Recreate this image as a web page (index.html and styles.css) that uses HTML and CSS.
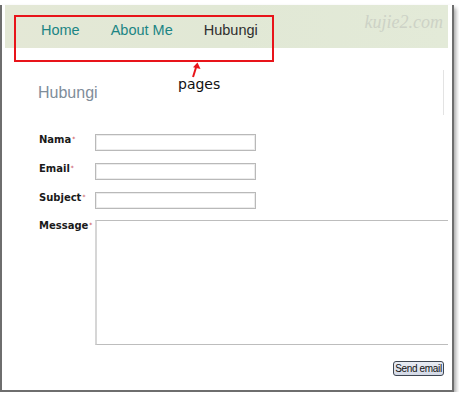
FILE: index.html
```html
<!DOCTYPE html>
<html>
<head>
<meta charset="utf-8">
<link rel="stylesheet" href="styles.css">
</head>
<body>
<div class="frame">
  <div class="header">
    <nav class="nav">
      <a class="nav-link">Home</a>
      <a class="nav-link">About Me</a>
      <a class="nav-link current">Hubungi</a>
    </nav>
    <div class="watermark">kujie2.com</div>
  </div>

  <div class="top-row">
    <h1 class="title">Hubungi</h1>
  </div>

  <form class="form">
    <div class="row">
      <label class="label">Nama<span class="req">*</span></label>
      <input class="field" type="text">
    </div>
    <div class="row">
      <label class="label">Email<span class="req">*</span></label>
      <input class="field" type="text">
    </div>
    <div class="row">
      <label class="label">Subject<span class="req">*</span></label>
      <input class="field" type="text">
    </div>
    <div class="row row-msg">
      <label class="label">Message<span class="req">*</span></label>
      <textarea class="area"></textarea>
    </div>
    <div class="actions">
      <button class="send" type="button">Send email</button>
    </div>
  </form>

  <div class="annot-box"></div>
  <svg class="annot-arrow" width="14" height="16" viewBox="0 0 14 16">
    <line x1="5" y1="15" x2="8.5" y2="4" stroke="#e8141a" stroke-width="2"/>
    <polygon points="9.5,0.5 12.5,7 5,5.2" fill="#e8141a"/>
  </svg>
  <div class="annot-text">pages</div>
</div>
</body>
</html>
```

FILE: styles.css
```css
html, body {
  margin: 0;
  padding: 0;
  background: #ffffff;
}

.frame {
  position: relative;
  width: 450px;
  height: 385px;
  border-left: 2px solid #6e6e6e;
  border-right: 2px solid #6e6e6e;
  border-bottom: 2px solid #6e6e6e;
  box-shadow: 2px 3px 4px rgba(0, 0, 0, 0.35);
  background: #ffffff;
}

.header {
  display: flex;
  align-items: flex-start;
  height: 43px;
  margin: 5px 4px 0 3px;
  background: linear-gradient(90deg, #e4e8d6 0%, #e1e8d5 50%, #e3ead8 100%);
}

.nav {
  display: flex;
  gap: 31px;
  padding: 16px 0 0 36px;
}

.nav-link {
  font-family: "Liberation Sans", Arial, sans-serif;
  font-size: 14.5px;
  line-height: 18px;
  color: #1c8584;
  text-decoration: none;
}

.nav-link.current {
  color: #2e2e2e;
}

.watermark {
  margin: 6px 5px 0 auto;
  font-family: "Liberation Serif", "Times New Roman", serif;
  font-style: italic;
  font-size: 18px;
  line-height: 22px;
  color: #cdd2c6;
}

.top-row {
  height: 45px;
  margin: 22px 8px 0 0;
  border-right: 1px solid #e3e3e3;
  box-sizing: border-box;
}

.title {
  margin: 0;
  padding: 13px 0 0 36px;
  font-family: "Liberation Sans", Arial, sans-serif;
  font-weight: normal;
  font-size: 16px;
  line-height: 20px;
  color: #7f8d9a;
}

.form {
  margin: 19px 4px 0 0;
  padding-left: 37px;
  overflow: hidden;
}

.row {
  display: flex;
  align-items: flex-start;
  margin-bottom: 12px;
}

.row-msg {
  margin-top: -1px;
  margin-bottom: 0;
}

.label {
  width: 56px;
  flex: none;
  font-family: "DejaVu Sans", Verdana, sans-serif;
  font-weight: bold;
  font-size: 10px;
  line-height: 12px;
  color: #1a1a1a;
  white-space: nowrap;
}

.req {
  font-size: 6px;
  line-height: 6px;
  vertical-align: 2px;
  font-weight: normal;
  color: #c0303a;
  margin-left: 1px;
}

.field {
  flex: none;
  width: 161px;
  height: 17px;
  margin: 0;
  padding: 0;
  box-sizing: border-box;
  border: 1px solid #b9b9b9;
  box-shadow: inset 0 0 0 1px #ececec;
  background: #ffffff;
}

.area {
  flex: none;
  width: 380px;
  height: 125px;
  margin: 0;
  padding: 0;
  box-sizing: border-box;
  border: 1px solid #bdbdbd;
  border-left-width: 2px;
  border-left-color: #d6d6d6;
  background: #ffffff;
  resize: none;
}

.actions {
  display: flex;
  justify-content: flex-end;
  margin-top: 16px;
  padding-right: 4px;
}

.send {
  width: 51px;
  height: 15px;
  margin: 0;
  padding: 0;
  box-sizing: border-box;
  font-family: "Liberation Sans", Arial, sans-serif;
  font-size: 10px;
  letter-spacing: -0.35px;
  line-height: 12px;
  color: #111111;
  background: linear-gradient(#e8ecf4, #d3d9e6);
  border: 1px solid #3e4652;
  border-radius: 3px;
  white-space: nowrap;
  overflow: hidden;
}

.annot-box {
  position: absolute;
  left: 12px;
  top: 10px;
  width: 260px;
  height: 47px;
  box-sizing: border-box;
  border: 2px solid #e8141a;
}

.annot-arrow {
  position: absolute;
  left: 186px;
  top: 57px;
}

.annot-text {
  position: absolute;
  left: 176px;
  top: 71px;
  font-family: "DejaVu Sans", Verdana, sans-serif;
  font-size: 14px;
  line-height: 16px;
  color: #111111;
}
```
